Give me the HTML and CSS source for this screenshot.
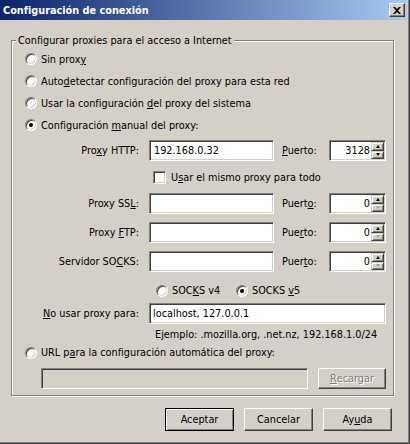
FILE: index.html
```html
<!DOCTYPE html>
<html lang="es">
<head>
<meta charset="utf-8">
<title>Configuración de conexión</title>
<link rel="stylesheet" href="styles.css">
</head>
<body>
<div class="window">
  <div class="titlebar">
    <span class="title">Configuración de conexión</span>
    <span class="close"><svg width="8" height="7" viewBox="0 0 8 7"><path d="M0 0h2l2 2 2-2h2L5 3.5 8 7H6L4 5 2 7H0l3-3.5z" fill="#000"/></svg></span>
  </div>
  <div class="group">
    <div class="legend">Configurar proxies para el acceso a Internet</div>
    <div class="opt first"><span class="radio"></span><span>Sin prox<u>y</u></span></div>
    <div class="opt"><span class="radio"></span><span>Auto<u>d</u>etectar configuración del proxy para esta red</span></div>
    <div class="opt"><span class="radio"></span><span>Usar la configuración <u>d</u>el proxy del sistema</span></div>
    <div class="opt"><span class="radio on"></span><span>Configuración <u>m</u>anual del proxy:</span></div>

    <div class="frow r-http">
      <span class="lbl">Pro<u>x</u>y HTTP:</span>
      <span class="edit">192.168.0.32</span>
      <span class="plbl"><u>P</u>uerto:</span>
      <span class="spin"><span class="spin-val">3128</span><span class="spin-btns"><span class="sb"><i class="up"></i></span><span class="sb"><i class="down"></i></span></span></span>
    </div>
    <div class="chk-row"><span class="chk"></span><span>U<u>s</u>ar el mismo proxy para todo</span></div>
    <div class="frow r-ssl">
      <span class="lbl">Proxy SS<u>L</u>:</span>
      <span class="edit"></span>
      <span class="plbl">Puert<u>o</u>:</span>
      <span class="spin"><span class="spin-val">0</span><span class="spin-btns"><span class="sb"><i class="up"></i></span><span class="sb"><i class="down off"></i></span></span></span>
    </div>
    <div class="frow r-next">
      <span class="lbl">Proxy <u>F</u>TP:</span>
      <span class="edit"></span>
      <span class="plbl">Pue<u>r</u>to:</span>
      <span class="spin"><span class="spin-val">0</span><span class="spin-btns"><span class="sb"><i class="up"></i></span><span class="sb"><i class="down off"></i></span></span></span>
    </div>
    <div class="frow r-next">
      <span class="lbl">Servidor SO<u>C</u>KS:</span>
      <span class="edit"></span>
      <span class="plbl">Puer<u>t</u>o:</span>
      <span class="spin"><span class="spin-val">0</span><span class="spin-btns"><span class="sb"><i class="up"></i></span><span class="sb"><i class="down off"></i></span></span></span>
    </div>
    <div class="socks-row">
      <div class="sopt"><span class="radio"></span><span>SOC<u>K</u>S v4</span></div>
      <div class="sopt"><span class="radio on"></span><span>SOCKS <u>v</u>5</span></div>
    </div>
    <div class="frow r-noproxy">
      <span class="lbl"><u>N</u>o usar proxy para:</span>
      <span class="edit wide">localhost, 127.0.0.1</span>
    </div>
    <div class="example">Ejemplo: .mozilla.org, .net.nz, 192.168.1.0/24</div>
    <div class="opt small"><span class="radio"></span><span>URL p<u>a</u>ra la configuración automática del proxy:</span></div>
    <div class="url-row">
      <span class="edit url disabled"></span>
      <span class="btn disabled-btn"><u>R</u>ecargar</span>
    </div>
  </div>
  <div class="buttons">
    <span class="btn default">Aceptar</span>
    <span class="btn">Cancelar</span>
    <span class="btn">Ay<u>u</u>da</span>
  </div>
</div>
</body>
</html>
```
FILE: styles.css
```css
* { box-sizing: border-box; }
body {
  margin: 0;
  background: #d4d0c8;
  font-family: "DejaVu Sans Condensed", "DejaVu Sans", sans-serif;
  font-stretch: condensed;
  font-size: 10.8px;
  line-height: 13px;
  color: #000;
}
u { text-decoration: underline; text-underline-offset: 1px; }

.window {
  width: 410px;
  height: 444px;
  display: flex;
  flex-direction: column;
  background: #d4d0c8;
  border-right: 1px solid #404040;
  border-bottom: 1px solid #404040;
  padding: 0 2px 2px 0;
  box-shadow: inset -1px -1px 0 #808080;
}

.titlebar {
  height: 20px;
  flex: none;
  display: flex;
  align-items: center;
  justify-content: space-between;
  padding-left: 3px;
  background: linear-gradient(to right, #0a246a, #a6caf0);
  color: #fff;
  font-weight: bold;
  font-size: 10.8px;
}
.close {
  width: 16px;
  height: 14px;
  margin-right: 2px;
  background: #d4d0c8;
  border: 1px solid;
  border-color: #fff #404040 #404040 #fff;
  box-shadow: inset -1px -1px 0 #808080;
  display: flex;
  align-items: center;
  justify-content: center;
}

.group {
  margin: 20px 0 0 11px;
  width: 383px;
  border: 1px solid #808080;
  box-shadow: 1px 1px 0 #fff, inset 1px 1px 0 #fff;
  padding-bottom: 6px;
  display: flex;
  flex-direction: column;
}
.legend {
  align-self: flex-start;
  margin: -7px 0 0 4px;
  padding: 0 2px;
  background: #d4d0c8;
  height: 13px;
}

.opt {
  display: flex;
  align-items: center;
  gap: 4px;
  height: 22px;
  padding-left: 13px;
}
.opt.first { margin-top: 1px; }
.opt.small { height: 13px; margin-top: 5px; }

.radio {
  flex: none;
  width: 12px;
  height: 12px;
  border-radius: 50%;
  background: #fff;
  border: 1px solid;
  border-color: #808080 #fff #fff #808080;
  box-shadow: inset 1px 1px 0 #404040, inset -1px -1px 0 #d4d0c8;
  display: flex;
  align-items: center;
  justify-content: center;
}
.radio.on::after {
  content: "";
  width: 4px;
  height: 4px;
  border-radius: 50%;
  background: #000;
}

.chk-row {
  display: flex;
  align-items: center;
  gap: 5px;
  height: 13px;
  margin-top: 10px;
  padding-left: 141px;
}
.chk {
  flex: none;
  width: 13px;
  height: 13px;
  background: #fff;
  border: 1px solid;
  border-color: #808080 #fff #fff #808080;
  box-shadow: inset 1px 1px 0 #404040, inset -1px -1px 0 #d4d0c8;
}

.frow {
  display: flex;
  align-items: center;
  height: 21px;
}
.r-http { margin-top: 4px; }
.r-ssl { margin-top: 9px; }
.r-next { margin-top: 8px; }
.r-noproxy { margin-top: 6px; }
.lbl {
  width: 127px;
  margin-right: 10px;
  text-align: right;
  white-space: nowrap;
}
.edit {
  flex: none;
  width: 125px;
  height: 21px;
  background: #fff;
  border: 1px solid;
  border-color: #808080 #fff #fff #808080;
  box-shadow: inset 1px 1px 0 #404040, inset -1px -1px 0 #d4d0c8;
  padding: 3px 0 0 4px;
  white-space: nowrap;
}
.edit.wide { width: 237px; padding-left: 3px; }
.edit.url { width: 267px; }
.edit.disabled { background: #d4d0c8; }
.plbl {
  width: 39px;
  margin-left: 8px;
  white-space: nowrap;
}
.spin {
  flex: none;
  width: 57px;
  height: 21px;
  margin-left: 8px;
  display: flex;
  background: #fff;
  border: 1px solid;
  border-color: #808080 #fff #fff #808080;
  box-shadow: inset 1px 1px 0 #404040, inset -1px -1px 0 #d4d0c8;
  padding: 1px;
}
.spin-val {
  flex: 1;
  text-align: right;
  padding: 2px 1px 0 0;
}
.spin-btns {
  width: 13px;
  display: flex;
  flex-direction: column;
}
.sb {
  flex: 1;
  background: #d4d0c8;
  border: 1px solid;
  border-color: #d4d0c8 #404040 #404040 #d4d0c8;
  box-shadow: inset 1px 1px 0 #fff, inset -1px -1px 0 #808080;
  display: flex;
  align-items: center;
  justify-content: center;
}
.up, .down {
  width: 0;
  height: 0;
  border-left: 2.5px solid transparent;
  border-right: 2.5px solid transparent;
}
.up { border-bottom: 3px solid #000; }
.down { border-top: 3px solid #000; }
.down.off { border-top-color: #a0a0a0; }

.socks-row {
  display: flex;
  align-items: center;
  height: 13px;
  margin-top: 12px;
  padding-left: 144px;
}
.sopt {
  display: flex;
  align-items: center;
  gap: 4px;
  width: 80px;
}

.example {
  height: 13px;
  margin-top: 4px;
  padding-left: 143px;
}

.url-row {
  display: flex;
  align-items: center;
  margin-top: 9px;
  padding-left: 29px;
  height: 21px;
}

.btn {
  flex: none;
  width: 69px;
  height: 23px;
  display: flex;
  align-items: center;
  justify-content: center;
  background: #d4d0c8;
  border: 1px solid;
  border-color: #fff #404040 #404040 #fff;
  box-shadow: inset -1px -1px 0 #808080;
}
.btn.default {
  border-color: #000;
  box-shadow: inset 1px 1px 0 #fff, inset -1px -1px 0 #808080;
}
.disabled-btn {
  margin-left: 10px;
  width: 68px;
  height: 21px;
  color: #808080;
  text-shadow: 1px 1px 0 #fff;
}

.buttons {
  display: flex;
  justify-content: flex-end;
  gap: 10px;
  margin-top: 12px;
  padding-right: 15px;
}
```
